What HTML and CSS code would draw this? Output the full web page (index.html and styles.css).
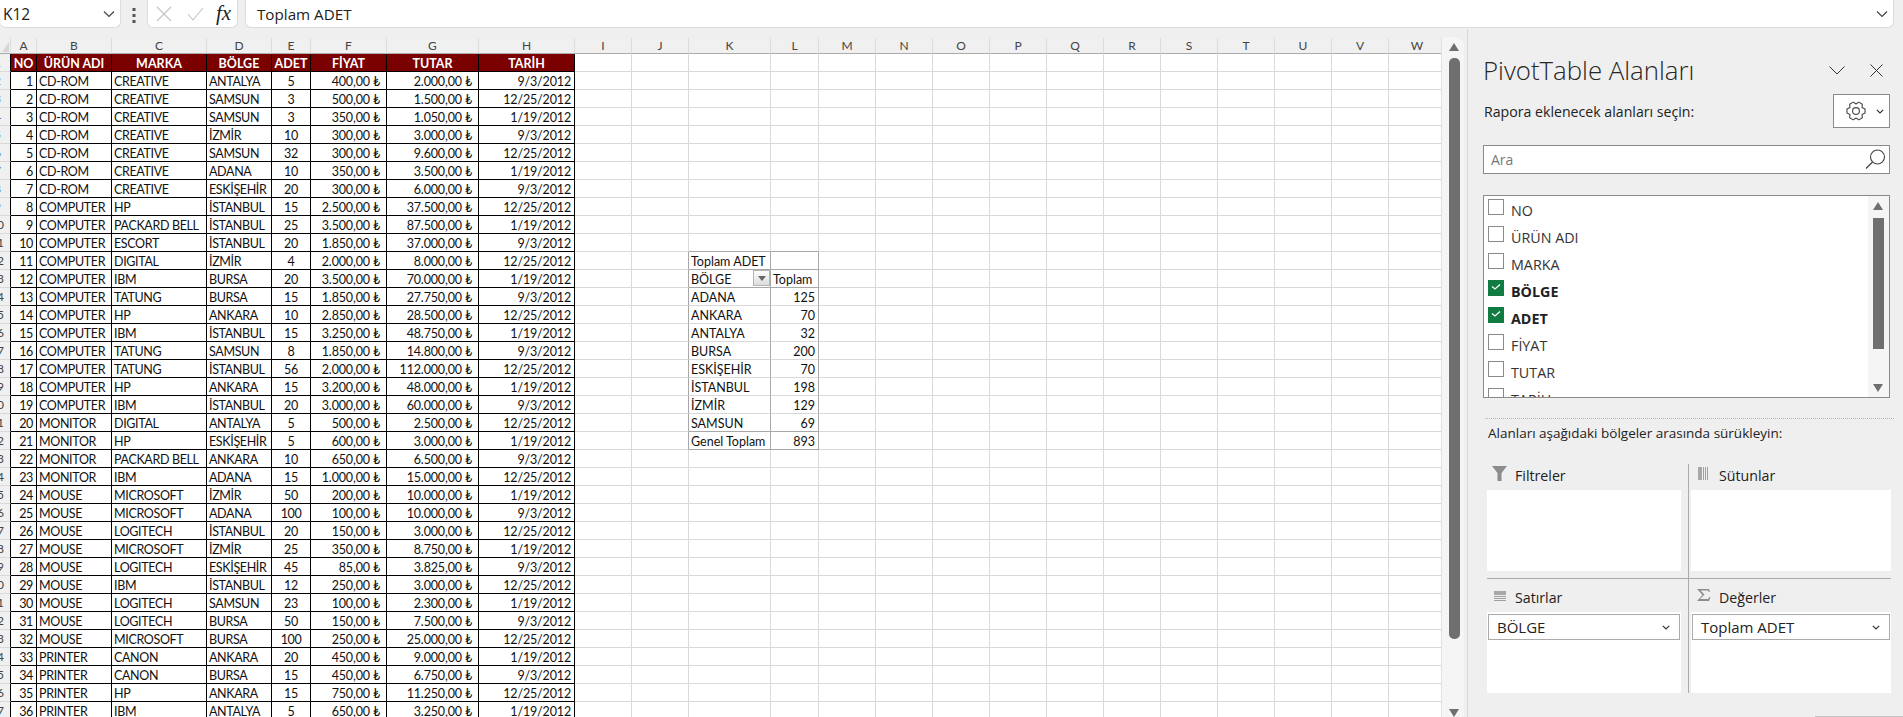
FILE: index.html
```html
<!DOCTYPE html>
<html lang="tr">
<head>
<meta charset="utf-8">
<title>PivotTable</title>
<link rel="stylesheet" href="styles.css">
</head>
<body>
<div class="fbar">
  <div class="namebox"><span>K12</span>
    <svg class="ic" width="12" height="8" viewBox="0 0 12 8"><path d="M1 1.5l5 5 5-5" fill="none" stroke="#444" stroke-width="1.2"/></svg>
  </div>
  <svg class="dots" width="4" height="16" viewBox="0 0 4 16"><path d="M0.500 1h3v3h-3zM0.500 7h3v3h-3zM0.500 13h3v3h-3z" fill="#555"/></svg>
  <div class="fxbox">
    <svg width="16" height="16" viewBox="0 0 16 16"><path d="M1 1l14 14M15 1L1 15" fill="none" stroke="#c4c4c4" stroke-width="1.1"/></svg>
    <svg width="17" height="14" viewBox="0 0 17 14"><path d="M1 7l5 6L16 1" fill="none" stroke="#c4c4c4" stroke-width="1.1"/></svg>
    <span class="fx">fx</span>
  </div>
  <div class="formula"><span>Toplam ADET</span>
    <svg width="12" height="8" viewBox="0 0 12 8"><path d="M1 1.500l5 5 5-5" fill="none" stroke="#444" stroke-width="1.2"/></svg>
  </div>
</div>
<div class="main">
  <div class="sheet">
    <table class="grid">
      <colgroup><col class="w11"><col class="w26"><col class="w75"><col class="w95"><col class="w65"><col class="w39"><col class="w76"><col class="w92"><col class="w96"><col class="w57"><col class="w57"><col class="w82"><col class="w48"><col class="w57"><col class="w57"><col class="w57"><col class="w57"><col class="w57"><col class="w57"><col class="w57"><col class="w57"><col class="w57"><col class="w57"><col class="w57"></colgroup>
      <thead><tr class="cols"><th class="corner"><span class="tri"></span></th><th>A</th><th>B</th><th>C</th><th>D</th><th>E</th><th>F</th><th>G</th><th>H</th><th>I</th><th>J</th><th>K</th><th>L</th><th>M</th><th>N</th><th>O</th><th>P</th><th>Q</th><th>R</th><th>S</th><th>T</th><th>U</th><th>V</th><th>W</th></tr></thead>
      <tbody>
<tr class="hd"><th class="rn one">1</th><td>NO</td><td>ÜRÜN ADI</td><td>MARKA</td><td>BÖLGE</td><td>ADET</td><td>FİYAT</td><td>TUTAR</td><td>TARİH</td><td></td><td></td><td></td><td></td><td></td><td></td><td></td><td></td><td></td><td></td><td></td><td></td><td></td><td></td><td></td></tr>
<tr><th class="rn one">2</th><td>1</td><td>CD-ROM</td><td>CREATIVE</td><td>ANTALYA</td><td>5</td><td>400,00 ₺</td><td>2.000,00 ₺</td><td>9/3/2012</td><td></td><td></td><td></td><td></td><td></td><td></td><td></td><td></td><td></td><td></td><td></td><td></td><td></td><td></td><td></td></tr>
<tr><th class="rn one">3</th><td>2</td><td>CD-ROM</td><td>CREATIVE</td><td>SAMSUN</td><td>3</td><td>500,00 ₺</td><td>1.500,00 ₺</td><td>12/25/2012</td><td></td><td></td><td></td><td></td><td></td><td></td><td></td><td></td><td></td><td></td><td></td><td></td><td></td><td></td><td></td></tr>
<tr><th class="rn one">4</th><td>3</td><td>CD-ROM</td><td>CREATIVE</td><td>SAMSUN</td><td>3</td><td>350,00 ₺</td><td>1.050,00 ₺</td><td>1/19/2012</td><td></td><td></td><td></td><td></td><td></td><td></td><td></td><td></td><td></td><td></td><td></td><td></td><td></td><td></td><td></td></tr>
<tr><th class="rn one">5</th><td>4</td><td>CD-ROM</td><td>CREATIVE</td><td>İZMİR</td><td>10</td><td>300,00 ₺</td><td>3.000,00 ₺</td><td>9/3/2012</td><td></td><td></td><td></td><td></td><td></td><td></td><td></td><td></td><td></td><td></td><td></td><td></td><td></td><td></td><td></td></tr>
<tr><th class="rn one">6</th><td>5</td><td>CD-ROM</td><td>CREATIVE</td><td>SAMSUN</td><td>32</td><td>300,00 ₺</td><td>9.600,00 ₺</td><td>12/25/2012</td><td></td><td></td><td></td><td></td><td></td><td></td><td></td><td></td><td></td><td></td><td></td><td></td><td></td><td></td><td></td></tr>
<tr><th class="rn one">7</th><td>6</td><td>CD-ROM</td><td>CREATIVE</td><td>ADANA</td><td>10</td><td>350,00 ₺</td><td>3.500,00 ₺</td><td>1/19/2012</td><td></td><td></td><td></td><td></td><td></td><td></td><td></td><td></td><td></td><td></td><td></td><td></td><td></td><td></td><td></td></tr>
<tr><th class="rn one">8</th><td>7</td><td>CD-ROM</td><td>CREATIVE</td><td>ESKİŞEHİR</td><td>20</td><td>300,00 ₺</td><td>6.000,00 ₺</td><td>9/3/2012</td><td></td><td></td><td></td><td></td><td></td><td></td><td></td><td></td><td></td><td></td><td></td><td></td><td></td><td></td><td></td></tr>
<tr><th class="rn one">9</th><td>8</td><td>COMPUTER</td><td>HP</td><td>İSTANBUL</td><td>15</td><td>2.500,00 ₺</td><td>37.500,00 ₺</td><td>12/25/2012</td><td></td><td></td><td></td><td></td><td></td><td></td><td></td><td></td><td></td><td></td><td></td><td></td><td></td><td></td><td></td></tr>
<tr><th class="rn">10</th><td>9</td><td>COMPUTER</td><td>PACKARD BELL</td><td>İSTANBUL</td><td>25</td><td>3.500,00 ₺</td><td>87.500,00 ₺</td><td>1/19/2012</td><td></td><td></td><td></td><td></td><td></td><td></td><td></td><td></td><td></td><td></td><td></td><td></td><td></td><td></td><td></td></tr>
<tr><th class="rn">11</th><td>10</td><td>COMPUTER</td><td>ESCORT</td><td>İSTANBUL</td><td>20</td><td>1.850,00 ₺</td><td>37.000,00 ₺</td><td>9/3/2012</td><td></td><td></td><td class="pb"></td><td class="pb"></td><td></td><td></td><td></td><td></td><td></td><td></td><td></td><td></td><td></td><td></td><td></td></tr>
<tr><th class="rn">12</th><td>11</td><td>COMPUTER</td><td>DIGITAL</td><td>İZMİR</td><td>4</td><td>2.000,00 ₺</td><td>8.000,00 ₺</td><td>12/25/2012</td><td></td><td class="pr"></td><td class="pv pb">Toplam ADET</td><td class="pv pb"></td><td></td><td></td><td></td><td></td><td></td><td></td><td></td><td></td><td></td><td></td><td></td></tr>
<tr><th class="rn">13</th><td>12</td><td>COMPUTER</td><td>IBM</td><td>BURSA</td><td>20</td><td>3.500,00 ₺</td><td>70.000,00 ₺</td><td>1/19/2012</td><td></td><td class="pr"></td><td class="pv pb flt">BÖLGE<span class="fbtn"><span class="ftri"></span></span></td><td class="pv pb">Toplam</td><td></td><td></td><td></td><td></td><td></td><td></td><td></td><td></td><td></td><td></td><td></td></tr>
<tr><th class="rn">14</th><td>13</td><td>COMPUTER</td><td>TATUNG</td><td>BURSA</td><td>15</td><td>1.850,00 ₺</td><td>27.750,00 ₺</td><td>9/3/2012</td><td></td><td class="pr"></td><td class="pv">ADANA</td><td class="pv num">125</td><td></td><td></td><td></td><td></td><td></td><td></td><td></td><td></td><td></td><td></td><td></td></tr>
<tr><th class="rn">15</th><td>14</td><td>COMPUTER</td><td>HP</td><td>ANKARA</td><td>10</td><td>2.850,00 ₺</td><td>28.500,00 ₺</td><td>12/25/2012</td><td></td><td class="pr"></td><td class="pv">ANKARA</td><td class="pv num">70</td><td></td><td></td><td></td><td></td><td></td><td></td><td></td><td></td><td></td><td></td><td></td></tr>
<tr><th class="rn">16</th><td>15</td><td>COMPUTER</td><td>IBM</td><td>İSTANBUL</td><td>15</td><td>3.250,00 ₺</td><td>48.750,00 ₺</td><td>1/19/2012</td><td></td><td class="pr"></td><td class="pv">ANTALYA</td><td class="pv num">32</td><td></td><td></td><td></td><td></td><td></td><td></td><td></td><td></td><td></td><td></td><td></td></tr>
<tr><th class="rn">17</th><td>16</td><td>COMPUTER</td><td>TATUNG</td><td>SAMSUN</td><td>8</td><td>1.850,00 ₺</td><td>14.800,00 ₺</td><td>9/3/2012</td><td></td><td class="pr"></td><td class="pv">BURSA</td><td class="pv num">200</td><td></td><td></td><td></td><td></td><td></td><td></td><td></td><td></td><td></td><td></td><td></td></tr>
<tr><th class="rn">18</th><td>17</td><td>COMPUTER</td><td>TATUNG</td><td>İSTANBUL</td><td>56</td><td>2.000,00 ₺</td><td>112.000,00 ₺</td><td>12/25/2012</td><td></td><td class="pr"></td><td class="pv">ESKİŞEHİR</td><td class="pv num">70</td><td></td><td></td><td></td><td></td><td></td><td></td><td></td><td></td><td></td><td></td><td></td></tr>
<tr><th class="rn">19</th><td>18</td><td>COMPUTER</td><td>HP</td><td>ANKARA</td><td>15</td><td>3.200,00 ₺</td><td>48.000,00 ₺</td><td>1/19/2012</td><td></td><td class="pr"></td><td class="pv">İSTANBUL</td><td class="pv num">198</td><td></td><td></td><td></td><td></td><td></td><td></td><td></td><td></td><td></td><td></td><td></td></tr>
<tr><th class="rn">20</th><td>19</td><td>COMPUTER</td><td>IBM</td><td>İSTANBUL</td><td>20</td><td>3.000,00 ₺</td><td>60.000,00 ₺</td><td>9/3/2012</td><td></td><td class="pr"></td><td class="pv">İZMİR</td><td class="pv num">129</td><td></td><td></td><td></td><td></td><td></td><td></td><td></td><td></td><td></td><td></td><td></td></tr>
<tr><th class="rn">21</th><td>20</td><td>MONITOR</td><td>DIGITAL</td><td>ANTALYA</td><td>5</td><td>500,00 ₺</td><td>2.500,00 ₺</td><td>12/25/2012</td><td></td><td class="pr"></td><td class="pv pb">SAMSUN</td><td class="pv pb num">69</td><td></td><td></td><td></td><td></td><td></td><td></td><td></td><td></td><td></td><td></td><td></td></tr>
<tr><th class="rn">22</th><td>21</td><td>MONITOR</td><td>HP</td><td>ESKİŞEHİR</td><td>5</td><td>600,00 ₺</td><td>3.000,00 ₺</td><td>1/19/2012</td><td></td><td class="pr"></td><td class="pv pb">Genel Toplam</td><td class="pv pb num">893</td><td></td><td></td><td></td><td></td><td></td><td></td><td></td><td></td><td></td><td></td><td></td></tr>
<tr><th class="rn">23</th><td>22</td><td>MONITOR</td><td>PACKARD BELL</td><td>ANKARA</td><td>10</td><td>650,00 ₺</td><td>6.500,00 ₺</td><td>9/3/2012</td><td></td><td></td><td></td><td></td><td></td><td></td><td></td><td></td><td></td><td></td><td></td><td></td><td></td><td></td><td></td></tr>
<tr><th class="rn">24</th><td>23</td><td>MONITOR</td><td>IBM</td><td>ADANA</td><td>15</td><td>1.000,00 ₺</td><td>15.000,00 ₺</td><td>12/25/2012</td><td></td><td></td><td></td><td></td><td></td><td></td><td></td><td></td><td></td><td></td><td></td><td></td><td></td><td></td><td></td></tr>
<tr><th class="rn">25</th><td>24</td><td>MOUSE</td><td>MICROSOFT</td><td>İZMİR</td><td>50</td><td>200,00 ₺</td><td>10.000,00 ₺</td><td>1/19/2012</td><td></td><td></td><td></td><td></td><td></td><td></td><td></td><td></td><td></td><td></td><td></td><td></td><td></td><td></td><td></td></tr>
<tr><th class="rn">26</th><td>25</td><td>MOUSE</td><td>MICROSOFT</td><td>ADANA</td><td>100</td><td>100,00 ₺</td><td>10.000,00 ₺</td><td>9/3/2012</td><td></td><td></td><td></td><td></td><td></td><td></td><td></td><td></td><td></td><td></td><td></td><td></td><td></td><td></td><td></td></tr>
<tr><th class="rn">27</th><td>26</td><td>MOUSE</td><td>LOGITECH</td><td>İSTANBUL</td><td>20</td><td>150,00 ₺</td><td>3.000,00 ₺</td><td>12/25/2012</td><td></td><td></td><td></td><td></td><td></td><td></td><td></td><td></td><td></td><td></td><td></td><td></td><td></td><td></td><td></td></tr>
<tr><th class="rn">28</th><td>27</td><td>MOUSE</td><td>MICROSOFT</td><td>İZMİR</td><td>25</td><td>350,00 ₺</td><td>8.750,00 ₺</td><td>1/19/2012</td><td></td><td></td><td></td><td></td><td></td><td></td><td></td><td></td><td></td><td></td><td></td><td></td><td></td><td></td><td></td></tr>
<tr><th class="rn">29</th><td>28</td><td>MOUSE</td><td>LOGITECH</td><td>ESKİŞEHİR</td><td>45</td><td>85,00 ₺</td><td>3.825,00 ₺</td><td>9/3/2012</td><td></td><td></td><td></td><td></td><td></td><td></td><td></td><td></td><td></td><td></td><td></td><td></td><td></td><td></td><td></td></tr>
<tr><th class="rn">30</th><td>29</td><td>MOUSE</td><td>IBM</td><td>İSTANBUL</td><td>12</td><td>250,00 ₺</td><td>3.000,00 ₺</td><td>12/25/2012</td><td></td><td></td><td></td><td></td><td></td><td></td><td></td><td></td><td></td><td></td><td></td><td></td><td></td><td></td><td></td></tr>
<tr><th class="rn">31</th><td>30</td><td>MOUSE</td><td>LOGITECH</td><td>SAMSUN</td><td>23</td><td>100,00 ₺</td><td>2.300,00 ₺</td><td>1/19/2012</td><td></td><td></td><td></td><td></td><td></td><td></td><td></td><td></td><td></td><td></td><td></td><td></td><td></td><td></td><td></td></tr>
<tr><th class="rn">32</th><td>31</td><td>MOUSE</td><td>LOGITECH</td><td>BURSA</td><td>50</td><td>150,00 ₺</td><td>7.500,00 ₺</td><td>9/3/2012</td><td></td><td></td><td></td><td></td><td></td><td></td><td></td><td></td><td></td><td></td><td></td><td></td><td></td><td></td><td></td></tr>
<tr><th class="rn">33</th><td>32</td><td>MOUSE</td><td>MICROSOFT</td><td>BURSA</td><td>100</td><td>250,00 ₺</td><td>25.000,00 ₺</td><td>12/25/2012</td><td></td><td></td><td></td><td></td><td></td><td></td><td></td><td></td><td></td><td></td><td></td><td></td><td></td><td></td><td></td></tr>
<tr><th class="rn">34</th><td>33</td><td>PRINTER</td><td>CANON</td><td>ANKARA</td><td>20</td><td>450,00 ₺</td><td>9.000,00 ₺</td><td>1/19/2012</td><td></td><td></td><td></td><td></td><td></td><td></td><td></td><td></td><td></td><td></td><td></td><td></td><td></td><td></td><td></td></tr>
<tr><th class="rn">35</th><td>34</td><td>PRINTER</td><td>CANON</td><td>BURSA</td><td>15</td><td>450,00 ₺</td><td>6.750,00 ₺</td><td>9/3/2012</td><td></td><td></td><td></td><td></td><td></td><td></td><td></td><td></td><td></td><td></td><td></td><td></td><td></td><td></td><td></td></tr>
<tr><th class="rn">36</th><td>35</td><td>PRINTER</td><td>HP</td><td>ANKARA</td><td>15</td><td>750,00 ₺</td><td>11.250,00 ₺</td><td>12/25/2012</td><td></td><td></td><td></td><td></td><td></td><td></td><td></td><td></td><td></td><td></td><td></td><td></td><td></td><td></td><td></td></tr>
<tr><th class="rn">37</th><td>36</td><td>PRINTER</td><td>IBM</td><td>ANTALYA</td><td>5</td><td>650,00 ₺</td><td>3.250,00 ₺</td><td>1/19/2012</td><td></td><td></td><td></td><td></td><td></td><td></td><td></td><td></td><td></td><td></td><td></td><td></td><td></td><td></td><td></td></tr>
      </tbody>
    </table>
  </div>
  <div class="vscroll">
    <span class="up"></span>
    <span class="thumb"></span>
    <span class="down"></span>
  </div>
  <aside class="panel">
    <div class="title-row">
      <h1 class="title">PivotTable Alanları</h1>
      <div class="title-ic">
        <svg width="16" height="9" viewBox="0 0 16 9"><path d="M0.500 0.500l7.500 7.500 7.500-7.500" fill="none" stroke="#333" stroke-width="1"/></svg>
        <svg width="13" height="13" viewBox="0 0 13 13"><path d="M0.500 0.500l12 12M12.500 0.500l-12 12" fill="none" stroke="#333" stroke-width="1"/></svg>
      </div>
    </div>
    <div class="pick-row">
      <span class="pick">Rapora eklenecek alanları seçin:</span>
      <div class="gearbtn">
        <svg width="20" height="20" viewBox="0 0 20 20"><path d="M19.060 7.910V12.090L16.060 13.500 16.340 16.800 12.720 18.890 10 17 7.280 18.890 3.660 16.800 3.940 13.500 0.940 12.090V7.910L3.940 6.500 3.660 3.200 7.280 1.110 10 3 12.720 1.110 16.340 3.200 16.060 6.500Z" fill="none" stroke="#444" stroke-width="1.100" stroke-linejoin="round"/><circle cx="10" cy="10" r="3.400" fill="none" stroke="#444" stroke-width="1.100"/></svg>
        <svg width="8" height="5" viewBox="0 0 8 5"><path d="M0.800 0.800L4 4l3.200-3.200" fill="none" stroke="#333" stroke-width="1.200"/></svg>
      </div>
    </div>
    <div class="search"><span>Ara</span>
      <svg width="21" height="21" viewBox="0 0 21 21"><circle cx="12.500" cy="8" r="7" fill="none" stroke="#444" stroke-width="1.100"/><path d="M7.500 13L1 19.500" fill="none" stroke="#444" stroke-width="1.300"/></svg>
    </div>
    <div class="fields">
      <ul class="flist">
        <li class="fitem"><span class="cb"></span><span>NO</span></li>
        <li class="fitem"><span class="cb"></span><span>ÜRÜN ADI</span></li>
        <li class="fitem"><span class="cb"></span><span>MARKA</span></li>
        <li class="fitem on"><span class="cb"><svg width="16" height="16" viewBox="0 0 16 16"><path d="M4 6.500l3 2.500 5-4.500" fill="none" stroke="#fff" stroke-width="1.200"/></svg></span><span>BÖLGE</span></li>
        <li class="fitem on"><span class="cb"><svg width="16" height="16" viewBox="0 0 16 16"><path d="M4 6.500l3 2.500 5-4.500" fill="none" stroke="#fff" stroke-width="1.200"/></svg></span><span>ADET</span></li>
        <li class="fitem"><span class="cb"></span><span>FİYAT</span></li>
        <li class="fitem"><span class="cb"></span><span>TUTAR</span></li>
        <li class="fitem"><span class="cb"></span><span>TARİH</span></li>
      </ul>
      <div class="fscroll">
        <span class="up"></span>
        <span class="fthumb"></span>
        <span class="down"></span>
      </div>
    </div>
    <div class="dotted"></div>
    <p class="drag">Alanları aşağıdaki bölgeler arasında sürükleyin:</p>
    <div class="areas">
      <section class="area a1">
        <div class="ahead">
          <svg class="aic" width="15" height="15" viewBox="0 0 15 15"><path d="M0 0h15L9.500 7v8h-4V7z" fill="#8c8c8c"/></svg>
          <span>Filtreler</span>
        </div>
        <div class="abox"></div>
      </section>
      <section class="area a2">
        <div class="ahead">
          <svg class="aic" width="14" height="13" viewBox="0 0 14 13"><path d="M1 0h4v13H1z" fill="#a8a8a8"/><path d="M6.500 0v13M8.500 0v13M10.500 0v13" stroke="#a0a0a0" stroke-width="1"/></svg>
          <span>Sütunlar</span>
        </div>
        <div class="abox"></div>
      </section>
      <section class="area a3">
        <div class="ahead">
          <svg class="aic" width="15" height="11" viewBox="0 0 15 11"><path d="M2 0h12v4H2z" fill="#a8a8a8"/><path d="M2 5.500h12M2 7.500h12M2 9.500h12" stroke="#a0a0a0" stroke-width="1"/></svg>
          <span>Satırlar</span>
        </div>
        <div class="abox"><div class="drop"><span>BÖLGE</span><svg width="8" height="5" viewBox="0 0 8 5"><path d="M0.800 0.800L4 4l3.200-3.200" fill="none" stroke="#333" stroke-width="1.200"/></svg></div></div>
      </section>
      <section class="area a4">
        <div class="ahead sig">
          <svg class="aic" width="14" height="12" viewBox="0 0 14 12"><path d="M0 0h12l1 3h-1l-1-1.500H3.500L7.500 5.500 3 10h8l1.500-2h1L12 12H0l5.500-6z" fill="#8c8c8c"/></svg>
          <span>Değerler</span>
        </div>
        <div class="abox"><div class="drop"><span>Toplam ADET</span><svg width="8" height="5" viewBox="0 0 8 5"><path d="M0.800 0.800L4 4l3.200-3.200" fill="none" stroke="#333" stroke-width="1.200"/></svg></div></div>
      </section>
    </div>
    <div class="update"></div>
  </aside>
</div>
</body>
</html>
```
FILE: styles.css
```css
* { box-sizing: border-box; }
html, body { margin: 0; height: 717px; overflow: hidden; }
body { background: #efefef; font-family: "Open Sans", "Noto Sans", sans-serif; color: #222; display: flex; flex-direction: column; }

.fbar { height: 29px; display: flex; align-items: stretch; flex: none; }
.namebox, .fxbox, .formula { background: #fff; height: 28px; border: 1px solid #dcdcdc; border-top: 0; border-radius: 0 0 6px 6px; display: flex; align-items: center; }
.namebox { width: 121px; padding: 0 5px 0 3px; justify-content: space-between; border-left: 0; font-size: 15.500px; }
.dots { align-self: center; margin: 0 11px 0 11px; }
.fxbox { width: 91px; padding-left: 8px; }
.fxbox svg:nth-child(2) { margin-left: 15px; }
.fx { font-family: "Liberation Serif", serif; font-style: italic; font-size: 21px; color: #222; margin-left: 12px; line-height: 1; }
.formula { flex: 1; margin: 0 9px 0 7px; padding: 0 5px 0 11px; justify-content: space-between; font-size: 15.200px; }

.main { flex: 1; display: flex; min-height: 0; }
.sheet { width: 1441px; flex: none; margin-top: 9px; overflow: hidden; background: #fff; }
.grid { table-layout: fixed; width: 1446px; border-collapse: separate; border-spacing: 0; font-family: Lato, "Liberation Sans", "DejaVu Sans", sans-serif; font-size: 12.500px; letter-spacing: -0.35px; color: #111; }
.w11 { width: 11px; } .w26 { width: 26px; } .w39 { width: 39px; } .w48 { width: 48px; } .w57 { width: 57px; } .w65 { width: 65px; } .w75 { width: 75px; } .w76 { width: 76px; } .w82 { width: 82px; } .w92 { width: 92px; } .w95 { width: 95px; } .w96 { width: 96px; }

.cols th { height: 16px; padding: 0; font-weight: 400; font-size: 12px; letter-spacing: 0; line-height: 15px; color: #444; background: #f0f0f0; border-right: 1px solid #dcdcdc; border-bottom: 1px solid #ababab; overflow: hidden; }
.tri { display: block; width: 0; height: 0; margin: 2px 0 0 2px; border-style: solid; border-width: 0 0 10px 7px; border-color: transparent transparent #d6d6d6 transparent; }

td { height: 18px; padding: 2px 2px 0; line-height: 15px; white-space: nowrap; overflow: hidden; border-right: 1px solid #d9d9d9; border-bottom: 1px solid #d9d9d9; }
.rn { height: 18px; padding: 0 7px 0 0; direction: rtl; font-weight: 400; font-size: 12px; letter-spacing: 0; line-height: 17px; color: #444; background: #f0f0f0; border-right: 1px solid #000; border-bottom: 1px solid #d9d9d9; overflow: hidden; white-space: nowrap; }
.rn.one { padding-right: 10px; }

tbody td:nth-child(-n+9) { border-right-color: #000; border-bottom-color: #000; }
tbody td:nth-child(2) { text-align: right; padding-right: 3px; }
tbody td:nth-child(6) { text-align: center; }
tbody td:nth-child(7), tbody td:nth-child(8) { text-align: right; padding-right: 6px; letter-spacing: -0.15px; }
tbody td:nth-child(9) { text-align: right; padding-right: 3px; letter-spacing: -0.15px; }

.hd td:nth-child(-n+9) { background: #7b0000; color: #fff; font-weight: 700; text-align: center; padding: 2px 0 0; font-size: 12.500px; letter-spacing: 0; }

.pv { letter-spacing: 0; border-right-color: #a8a8a8; }
.pb { border-bottom-color: #a8a8a8; }
.pr { border-right-color: #a8a8a8; }
.num { text-align: right; padding-right: 3px; }
.flt { padding-right: 0; }
.fbtn { float: right; width: 17px; height: 16px; margin-top: -2px; background: linear-gradient(#fdfdfd, #dcdcdc); border: 1px solid #b4b4b4; display: flex; align-items: center; justify-content: center; }
.ftri { width: 0; height: 0; border-style: solid; border-width: 5px 4px 0 4px; border-color: #666 transparent transparent transparent; }

.vscroll { width: 23px; flex: none; margin-top: 8px; padding-left: 7px; background: #f5f5f5; border-left: 1px solid #e2e2e2; border-radius: 0 9px 0 0; display: flex; flex-direction: column; align-items: flex-start; }
.vscroll .up { margin-top: 6px; }
.thumb { width: 11px; height: 581px; margin-top: 7px; background: #6f6f6f; border-radius: 5px; flex: none; }
.vscroll .down { margin-top: auto; }
.up, .down { display: block; width: 0; height: 0; border-style: solid; flex: none; }
.up { border-width: 0 5.500px 8px 5.500px; border-color: transparent transparent #6f6f6f transparent; }
.down { border-width: 8px 5.500px 0 5.500px; border-color: #6f6f6f transparent transparent transparent; }

.panel { width: 436px; margin-left: 3px; flex: none; padding: 26px 13px 0 15px; border-left: 1px solid #d8d8d8; overflow: hidden; }
.title-row { height: 30px; display: flex; justify-content: space-between; align-items: center; }
.title { margin: 0; font-size: 25.800px; font-weight: 300; line-height: 30px; color: #262626; }
.title-ic { display: flex; align-items: center; gap: 25px; margin-right: 7px; }
.pick-row { margin-top: 9px; height: 34px; display: flex; justify-content: space-between; align-items: center; }
.pick { font-size: 14.150px; margin-left: 1px; }
.gearbtn { width: 57px; height: 34px; background: #fff; border: 1px solid #8a8a8a; display: flex; align-items: center; padding-left: 12px; gap: 10px; }
.search { margin-top: 17px; height: 29px; background: #fff; border: 1px solid #8a8a8a; display: flex; justify-content: space-between; align-items: center; padding: 0 3px 0 7px; font-size: 14px; color: #777; }
.fields { margin-top: 21px; height: 203px; background: #fff; border: 1px solid #8a8a8a; display: flex; }
.flist { flex: 1; margin: 0; padding: 3px 0 0 4px; list-style: none; overflow: hidden; }
.fitem { height: 27px; display: flex; align-items: flex-start; font-size: 14.300px; line-height: 24px; color: #333; gap: 7px; }
.fitem.on { font-weight: 700; color: #222; }
.cb { width: 16px; height: 16px; flex: none; background: #fff; border: 1px solid #8a8a8a; }
.cb svg { display: block; margin: -1px; }
.on .cb { background: #107c41; border-color: #107c41; }
.fscroll { width: 21px; flex: none; background: #f5f5f5; padding: 6px 0 0 5px; display: flex; flex-direction: column; align-items: flex-start; }
.fthumb { width: 11px; height: 131px; margin-top: 8px; background: #6f6f6f; flex: none; }
.fscroll .down { margin-top: 35px; }
.dotted { margin: 20px -4px 0 2px; border-top: 1px dotted #b4b4b4; }
.drag { margin: 3px 0 0 5px; font-size: 13.500px; line-height: 22px; }
.areas { margin: 20px 0 0 4px; width: 404px; display: grid; grid-template-columns: 202px 202px; grid-template-rows: 115px 114px; }
.area { display: flex; flex-direction: column; }
.a1, .a2 { border-bottom: 1px solid #ababab; }
.a1, .a3 { border-right: 1px solid #ababab; }
.ahead { display: flex; align-items: flex-start; font-size: 14.200px; line-height: 24px; gap: 8px; }
.a1 .ahead, .a2 .ahead { height: 26px; }
.a3 .ahead, .a4 .ahead { height: 33px; padding-top: 7px; }
.a1 .ahead, .a3 .ahead { padding-left: 5px; }
.a2 .ahead, .a4 .ahead { padding-left: 8px; }
.aic { flex: none; margin-top: 3px; }
.a1 .aic { margin-top: 2px; }
.a3 .aic { margin-top: 5px; }
.sig .aic { margin-top: 3px; }
.abox { height: 81px; background: #fff; padding: 2px 1px; }
.a1 .abox, .a3 .abox { width: 194px; }
.a2 .abox, .a4 .abox { margin-left: 2px; }
.drop { height: 26px; display: flex; justify-content: space-between; align-items: center; border: 1px solid #ababab; padding: 0 9px 0 8px; font-size: 15px; }
.update { margin: 23px 0 0 332px; width: 91px; height: 20px; border: 1px solid #c4c4c4; }
```
